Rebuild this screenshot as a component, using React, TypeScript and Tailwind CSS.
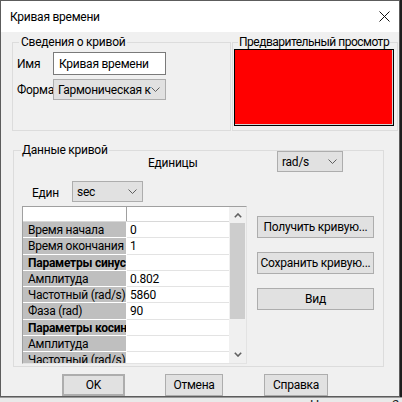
const rows = [
  { label: "Время начала", value: "0" },
  { label: "Время окончания", value: "1" },
  { label: "Параметры синус", value: "", bold: true },
  { label: "Амплитуда", value: "0.802" },
  { label: "Частотный (rad/s)", value: "5860" },
  { label: "Фаза (rad)", value: "90" },
  { label: "Параметры косин", value: "", bold: true },
  { label: "Амплитуда", value: "" },
  { label: "Частотный (rad/s)", value: "" },
];

const Chevron = () => (
  <svg width="9" height="5" viewBox="0 0 9 5" className="shrink-0">
    <polyline points="0.5,0.5 4.5,4.5 8.5,0.5" fill="none" stroke="#5f5f5f" strokeWidth="1" />
  </svg>
);

const Arrow = ({ up }: { up?: boolean }) => (
  <svg width="8" height="5" viewBox="0 0 8 5">
    <polyline
      points={up ? "0.8,4.2 4,1 7.2,4.2" : "0.8,0.8 4,4 7.2,0.8"}
      fill="none"
      stroke="#606060"
      strokeWidth="1.6"
    />
  </svg>
);

const Select = ({ value, className }: { value: string; className: string }) => (
  <div
    className={`flex items-center h-[21px] bg-[#e1e1e1] border border-[#adadad] pl-[4px] pr-[5px] ${className}`}
  >
    <span className="flex-1 overflow-hidden whitespace-nowrap">{value}</span>
    <Chevron />
  </div>
);

const Button = ({ children, className }: { children: string; className: string }) => (
  <button
    className={`h-[22px] bg-[#e1e1e1] border border-[#adadad] text-[12px] text-black whitespace-nowrap ${className}`}
  >
    {children}
  </button>
);

export default function App() {
  return (
    <div className="w-[402px] h-[402px] overflow-hidden bg-[#e9e9e9] text-[12px] leading-[16px] tracking-[-0.25px] text-black font-['Roboto',sans-serif]">
      <div className="flex">
        <div className="w-[400px] h-[397px] border border-[#5c5c5c] bg-[#f0f0f0] flex flex-col">
          {/* title bar */}
          <div className="h-[31px] bg-white flex items-center justify-between pl-[9px] pr-[9px]">
            <span>Кривая времени</span>
            <svg width="11" height="11" viewBox="0 0 11 11">
              <path d="M0.5 0.5L10.5 10.5M10.5 0.5L0.5 10.5" stroke="#111" strokeWidth="1" />
            </svg>
          </div>

          <div className="flex flex-col pl-[11px]">
            {/* top groups */}
            <div className="flex mt-[2px]">
              <fieldset className="w-[219px] h-[97px] border border-[#dcdcdc]">
                <legend className="ml-[6px] px-[2px]">Сведения о кривой</legend>
                <div className="flex flex-col pl-[4px] pt-[2px]">
                  <div className="flex items-center">
                    <span className="w-[36px]">Имя</span>
                    <div className="w-[113px] h-[23px] border border-[#7a7a7a] bg-white pl-[5px] flex items-center">
                      Кривая времени
                    </div>
                  </div>
                  <div className="flex items-center mt-[4px]">
                    <span className="w-[36px] whitespace-nowrap">Форма</span>
                    <Select value="Гармоническая к" className="w-[113px]" />
                  </div>
                </div>
              </fieldset>
              <fieldset className="w-[166px] h-[97px] ml-[1px] border border-[#dcdcdc]">
                <legend className="ml-[5px] px-[1px] whitespace-nowrap tracking-[-0.5px]">
                  Предварительный просмотр
                </legend>
                <div className="ml-[1px] mt-[-1px] w-[160px] h-[77px] border border-black">
                  <div className="w-full h-full bg-[#ff0000] border-r border-b border-[#d4d4d4]" />
                </div>
              </fieldset>
            </div>

            {/* curve data */}
            <fieldset className="mt-[11px] ml-[1px] w-[371px] h-[225px] border border-[#dcdcdc]">
              <legend className="ml-[7px] px-[1px]">Данные кривой</legend>
              <div className="flex mt-[-7px] h-[21px]">
                <span className="ml-[134px] w-[129px] mt-[4px]">Единицы</span>
                <Select value="rad/s" className="w-[66px]" />
              </div>
              <div className="flex mt-[9px] h-[21px]">
                <span className="ml-[18px] w-[40px] mt-[4px]">Един</span>
                <Select value="sec" className="w-[71px]" />
              </div>

              <div className="flex mt-[4px] ml-[8px]">
                {/* grid */}
                <div className="w-[225px] h-[158px] flex border-t border-l border-[#a0a0a0] border-r border-b border-r-[#e3e3e3] border-b-[#e3e3e3] overflow-hidden">
                  <div className="w-[206px] flex flex-col bg-white">
                    <div className="h-[15px] shrink-0 flex border-b border-[#d8d8d8]">
                      <div className="w-[104px] border-r border-[#a0a0a0]" />
                    </div>
                    {rows.map((r, i) => (
                      <div key={i} className="h-[16.25px] shrink-0 flex">
                        <div
                          className={`w-[104px] bg-[#bfbfbf] border-r border-b border-white pl-[5px] overflow-hidden whitespace-nowrap ${
                            r.bold ? "font-bold" : ""
                          }`}
                        >
                          {r.label}
                        </div>
                        <div className="flex-1 border-b border-[#e3e3e3] pl-[3px]">{r.value}</div>
                      </div>
                    ))}
                  </div>
                  <div className="w-[17px] bg-[#f0f0f0] flex flex-col">
                    <div className="h-[16px] flex items-center justify-center">
                      <Arrow up />
                    </div>
                    <div className="mx-[1px] h-[96px] bg-[#cdcdcd]" />
                    <div className="flex-1" />
                    <div className="h-[17px] flex items-center justify-center">
                      <Arrow />
                    </div>
                  </div>
                </div>

                {/* side buttons */}
                <div className="flex flex-col ml-[10px] mt-[10px] gap-[14px]">
                  <Button className="w-[117px]">Получить кривую...</Button>
                  <Button className="w-[117px]">Сохранить кривую...</Button>
                  <Button className="w-[117px]">Вид</Button>
                </div>
              </div>
            </fieldset>

            {/* dialog buttons */}
            <div className="flex mt-[7px]">
              <Button className="ml-[50px] w-[63px] border-2 border-[#0078d7]">OK</Button>
              <Button className="ml-[40px] w-[58px]">Отмена</Button>
              <Button className="ml-[41px] w-[64px]">Справка</Button>
            </div>
          </div>
        </div>
        <div className="w-[2px] h-[397px] bg-[#1e1e1e]" />
      </div>
      <div className="h-[5px] overflow-hidden pl-[203px] border-t border-[#9a9a9a]">
        <div className="mt-[-1px] text-[13px] leading-[16px] whitespace-nowrap text-[#222]">
          вдоль плоскости. Направление 2 ос
        </div>
      </div>
    </div>
  );
}
